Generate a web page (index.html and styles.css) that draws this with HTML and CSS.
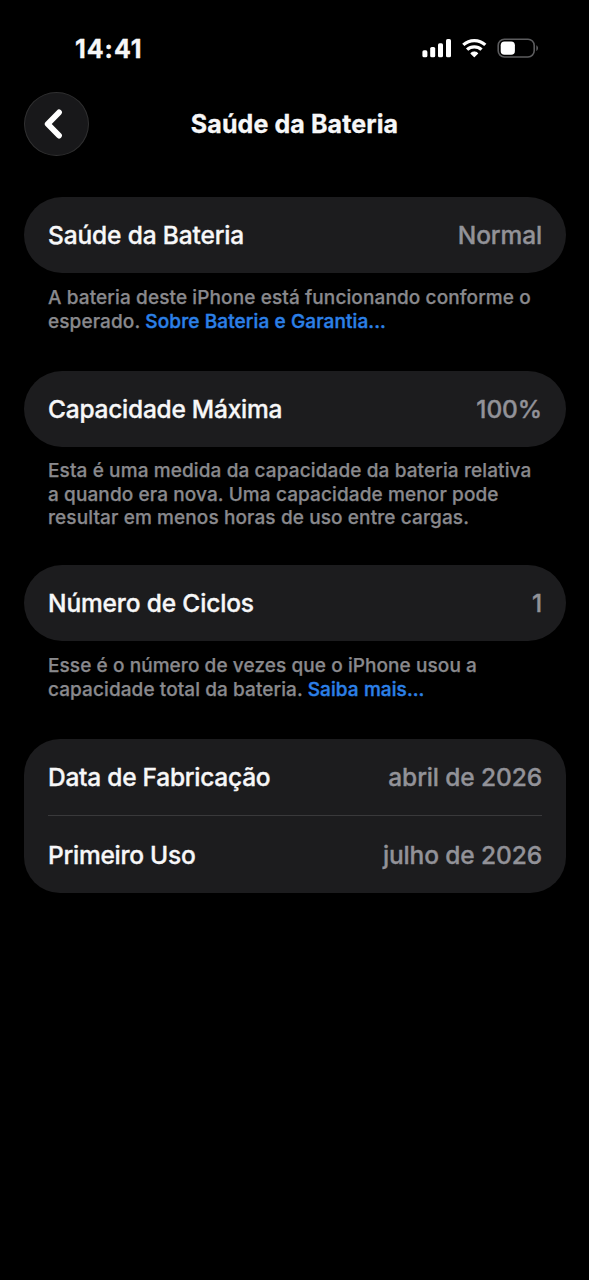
FILE: index.html
```html
<!DOCTYPE html>
<html lang="pt-BR">
<head>
<meta charset="utf-8">
<title>Saúde da Bateria</title>
<link rel="stylesheet" href="styles.css">
</head>
<body>
<div class="status-bar">
  <span class="clock">14:41</span>
  <svg class="status-icons" width="118" height="24" viewBox="0 0 118 24">
    <g fill="#fff">
      <rect x="1.4" y="13.3" width="5" height="7" rx="1.6"/>
      <rect x="9.2" y="10" width="5" height="10.3" rx="1.6"/>
      <rect x="17" y="6.3" width="5" height="14" rx="1.6"/>
      <rect x="25" y="2" width="5" height="18.3" rx="1.6"/>
      <path d="M53.3 19.7l-3.3-3.3a4.8 4.8 0 0 1 6.6 0z" stroke="#fff" stroke-width="1.2" stroke-linejoin="round"/>
    </g>
    <g fill="none" stroke="#fff" stroke-width="3.3">
      <path d="M42.3 7.9a16.3 16.3 0 0 1 22 0"/>
      <path d="M46.1 12.6a10.6 10.6 0 0 1 14.4 0"/>
    </g>
    <rect x="77.2" y="2.2" width="36" height="17.8" rx="6.2" fill="none" stroke="#5c5c5e" stroke-width="1.6"/>
    <path d="M115.3 8.2c2.3 1 2.3 4.8 0 5.8z" fill="#5c5c5e"/>
    <rect x="79.7" y="4.5" width="14.2" height="13.3" rx="3.8" fill="#fff"/>
  </svg>
</div>
<header class="nav">
  <button class="back" aria-label="Voltar">
    <svg width="24" height="34" viewBox="0 0 24 34"><path d="M17 5.4L5.7 17L17 28.6" fill="none" stroke="#fff" stroke-width="5.8" stroke-linecap="round" stroke-linejoin="round"/></svg>
  </button>
  <h1 class="title">Saúde da Bateria</h1>
</header>
<main class="content">
  <section class="group health">
    <div class="card"><div class="row"><span class="label">Saúde da Bateria</span><span class="value">Normal</span></div></div>
    <p class="note">A bateria deste iPhone está funcionando conforme o<br>esperado. <a class="link">Sobre Bateria e Garantia...</a></p>
  </section>
  <section class="group capacity">
    <div class="card"><div class="row"><span class="label">Capacidade Máxima</span><span class="value">100%</span></div></div>
    <p class="note">Esta é uma medida da capacidade da bateria relativa<br>a quando era nova. Uma capacidade menor pode<br>resultar em menos horas de uso entre cargas.</p>
  </section>
  <section class="group cycles">
    <div class="card"><div class="row"><span class="label">Número de Ciclos</span><span class="value">1</span></div></div>
    <p class="note">Esse é o número de vezes que o iPhone usou a<br>capacidade total da bateria. <a class="link">Saiba mais...</a></p>
  </section>
  <section class="group dates">
    <div class="card card-double">
      <div class="row"><span class="label">Data de Fabricação</span><span class="value">abril de 2026</span></div>
      <div class="row"><span class="label">Primeiro Uso</span><span class="value">julho de 2026</span></div>
    </div>
  </section>
</main>
</body>
</html>
```

FILE: styles.css
```css
* { box-sizing: border-box; }
body {
  margin: 0;
  min-height: 1280px;
  background: #000;
  color: #f7f7f8;
  font-family: Inter, "Liberation Sans", sans-serif;
}
.status-bar {
  display: flex;
  justify-content: space-between;
  align-items: center;
  height: 92px;
  padding: 5px 50px 0 75px;
}
.clock { font-size: 25px; font-weight: 700; letter-spacing: 0.95px; -webkit-text-stroke: 0.3px; }
.status-icons { display: block; margin-top: 1px; }
.nav {
  display: grid;
  grid-template-columns: 65px 1fr 65px;
  align-items: center;
  height: 64px;
  padding: 0 24px;
}
.back {
  display: flex;
  align-items: center;
  justify-content: center;
  width: 65px;
  height: 64px;
  padding: 0 5px 0 0;
  border: 1.5px solid #303031;
  border-radius: 50%;
  background: #18181a;
}
.title { margin: 0; text-align: center; font-size: 25px; line-height: 30px; font-weight: 700; letter-spacing: 0.1px; -webkit-text-stroke: 0.3px; }
.content { padding: 41px 23px 0 24px; }
.card { border-radius: 38px; background: #1c1c1e; }
.row {
  display: flex;
  justify-content: space-between;
  align-items: center;
  height: 76px;
  margin: 0 24px;
}
.card-double { border-radius: 36px; }
.card-double .row { height: 76px; }
.card-double .row + .row { height: 78px; border-top: 1px solid #39393b; }
.label, .value { font-size: 24.5px; line-height: 30px; font-weight: 500; letter-spacing: -0.15px; -webkit-text-stroke: 0.35px; }
.value { color: #929298; letter-spacing: -0.12px; }
.capacity .label, .dates .label { letter-spacing: -0.25px; }
.note {
  margin: 0;
  padding: 13px 24px 0;
  color: #89898d;
  font-size: 19px;
  line-height: 23.5px;
  font-weight: 500;
  letter-spacing: 0.11px;
  white-space: nowrap;
  -webkit-text-stroke: 0.25px;
}
.capacity .note { padding-top: 12px; }
.link { color: #2c80e8; -webkit-text-stroke: 0.4px; }
.health { height: 174px; }
.capacity { height: 194px; }
.cycles { height: 174px; }
.cycles .note { letter-spacing: 0.08px; }
```
